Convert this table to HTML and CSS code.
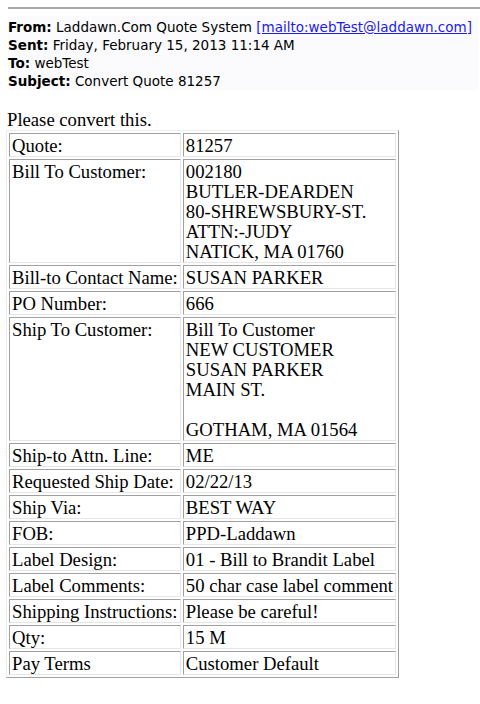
FILE: index.html
```html
<!DOCTYPE html>
<html>
<head>
<meta charset="utf-8">
<link rel="stylesheet" href="styles.css">
</head>
<body>
<div class="rule"></div>
<div class="hdr">
  <div class="hl"><b>From:</b> Laddawn.Com Quote System <a class="mail" href="#">[mailto:webTest@laddawn.com]</a></div>
  <div class="hl"><b>Sent:</b> Friday, February 15, 2013 11:14 AM</div>
  <div class="hl"><b>To:</b> webTest</div>
  <div class="hl"><b>Subject:</b> Convert Quote 81257</div>
</div>
<p class="intro">Please convert this.</p>
<table class="quote">
  <tr><td>Quote:</td><td>81257</td></tr>
  <tr><td>Bill To Customer:</td><td>002180<br>BUTLER-DEARDEN<br>80-SHREWSBURY-ST.<br>ATTN:-JUDY<br>NATICK, MA 01760</td></tr>
  <tr><td>Bill-to Contact Name:</td><td>SUSAN PARKER</td></tr>
  <tr><td>PO Number:</td><td>666</td></tr>
  <tr><td>Ship To Customer:</td><td>Bill To Customer<br>NEW CUSTOMER<br>SUSAN PARKER<br>MAIN ST.<br><br>GOTHAM, MA 01564</td></tr>
  <tr><td>Ship-to Attn. Line:</td><td>ME</td></tr>
  <tr><td>Requested Ship Date:</td><td>02/22/13</td></tr>
  <tr><td>Ship Via:</td><td>BEST WAY</td></tr>
  <tr><td>FOB:</td><td>PPD-Laddawn</td></tr>
  <tr><td>Label Design:</td><td>01 - Bill to Brandit Label</td></tr>
  <tr><td>Label Comments:</td><td>50 char case label comment</td></tr>
  <tr><td>Shipping Instructions:</td><td>Please be careful!</td></tr>
  <tr><td>Qty:</td><td>15 M</td></tr>
  <tr><td>Pay Terms</td><td>Customer Default</td></tr>
</table>
</body>
</html>
```

FILE: styles.css
```css
html, body {
  background: #ffffff;
}
body {
  margin: 0;
  padding: 7px 0 0 0;
  font-family: "Liberation Serif", serif;
  font-size: 18.67px;
  line-height: 20px;
  color: #000;
}
.rule {
  margin-left: 8px;
  height: 2px;
  background: #a8a8a8;
  margin-bottom: 7px;
}
.hdr {
  margin-left: 8px;
  margin-right: 2px;
  padding-top: 2px;
  background: #fbfbfd;
  font-family: "DejaVu Sans", sans-serif;
  font-size: 13.5px;
  line-height: 18px;
}
.hl b {
  font-weight: bold;
}
.mail {
  color: #1a1aee;
  text-decoration: underline;
}
.intro {
  margin: 20px 0 0 7px;
  line-height: 20px;
}
.quote {
  margin-left: 6px;
  border-collapse: separate;
  border-spacing: 2px;
  border: 1px solid;
  border-color: #ececec #a0a0a0 #a0a0a0 #ececec;
  font-family: "Liberation Serif", serif;
  font-size: 18.67px;
  line-height: 20px;
}
.quote td {
  padding: 2px 2px 0 2px;
  border: 1px solid;
  border-color: #a0a0a0 #e6e6e6 #e6e6e6 #a0a0a0;
  vertical-align: top;
  white-space: nowrap;
}
```
